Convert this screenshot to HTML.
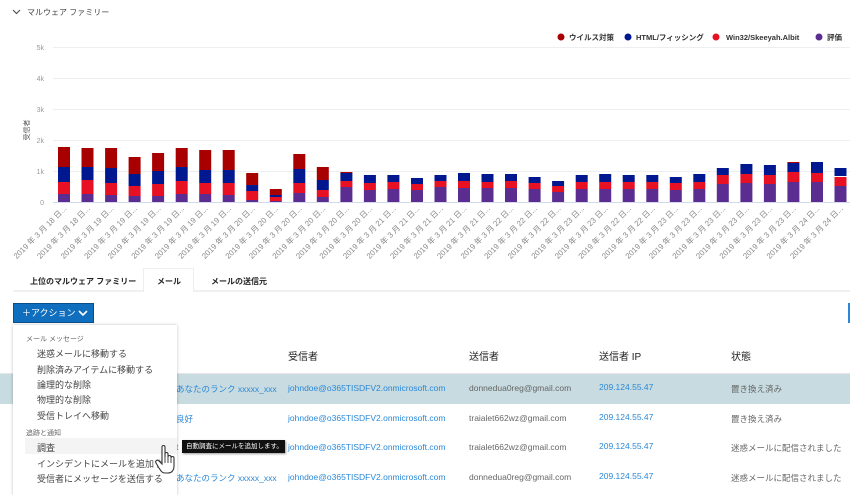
<!DOCTYPE html>
<html><head><meta charset="utf-8"><style>
*{margin:0;padding:0;box-sizing:border-box}
body{width:850px;height:490px;overflow:hidden;background:#fff;font-family:"Liberation Sans","Noto Sans CJK JP",sans-serif;position:relative;color:#333}
.a{position:absolute;white-space:nowrap}
.m{font-size:9px;color:#444}
.h{font-size:10px;color:#222}
.b{font-size:8.5px;color:#2b88d8}
.g{font-size:8.5px;color:#666}
</style></head><body>
<svg class="a" style="left:0;top:0" width="850" height="262" font-family="Liberation Sans,Noto Sans CJK JP,sans-serif">
<path d="M13 10 l3.5 3.5 l3.5 -3.5" stroke="#555" stroke-width="1.2" fill="none"/>
<text x="27" y="15" font-size="8" fill="#444">マルウェア ファミリー</text>
<g stroke="#eceef2" stroke-width="1"><line x1="53" y1="47.5" x2="850" y2="47.5"/><line x1="53" y1="78.5" x2="850" y2="78.5"/><line x1="53" y1="109.5" x2="850" y2="109.5"/><line x1="53" y1="140.5" x2="850" y2="140.5"/><line x1="53" y1="171.5" x2="850" y2="171.5"/></g>
<line x1="53" y1="202.5" x2="850" y2="202.5" stroke="#d4d8ec"/>
<g font-size="7" fill="#999" text-anchor="end"><text x="44" y="50">5k</text><text x="44" y="81">4k</text><text x="44" y="112">3k</text><text x="44" y="143">2k</text><text x="44" y="174">1k</text><text x="44" y="205">0</text></g>
<text transform="translate(29,130) rotate(-90)" font-size="7" fill="#555" text-anchor="middle">受信者</text>
<g font-size="7.5" font-weight="bold" fill="#333">
<circle cx="561" cy="37" r="3.5" fill="#a80000"/><text x="569" y="40">ウイルス対策</text>
<circle cx="628" cy="37" r="3.5" fill="#00188f"/><text x="636" y="40">HTML/フィッシング</text>
<circle cx="716" cy="37" r="3.5" fill="#e81123"/><text x="726" y="40">Win32/Skeeyah.Albit</text>
<circle cx="819" cy="37" r="3.5" fill="#5c2d91"/><text x="827" y="40">評価</text>
</g>
<g id="bars">
<g transform="translate(64,0)"><rect x="-6" y="194" width="12" height="8" fill="#5c2d91"/><rect x="-6" y="182" width="12" height="12" fill="#e81123"/><rect x="-6" y="167" width="12" height="15" fill="#00188f"/><rect x="-6" y="147" width="12" height="20" fill="#a80000"/></g>
<g transform="translate(87.5,0)"><rect x="-6" y="194" width="12" height="8" fill="#5c2d91"/><rect x="-6" y="180" width="12" height="14" fill="#e81123"/><rect x="-6" y="167" width="12" height="13" fill="#00188f"/><rect x="-6" y="148" width="12" height="19" fill="#a80000"/></g>
<g transform="translate(111.1,0)"><rect x="-6" y="195" width="12" height="7" fill="#5c2d91"/><rect x="-6" y="183" width="12" height="12" fill="#e81123"/><rect x="-6" y="168" width="12" height="15" fill="#00188f"/><rect x="-6" y="148" width="12" height="20" fill="#a80000"/></g>
<g transform="translate(134.6,0)"><rect x="-6" y="196" width="12" height="6" fill="#5c2d91"/><rect x="-6" y="186" width="12" height="10" fill="#e81123"/><rect x="-6" y="174" width="12" height="12" fill="#00188f"/><rect x="-6" y="157" width="12" height="17" fill="#a80000"/></g>
<g transform="translate(158.1,0)"><rect x="-6" y="196" width="12" height="6" fill="#5c2d91"/><rect x="-6" y="184" width="12" height="12" fill="#e81123"/><rect x="-6" y="171" width="12" height="13" fill="#00188f"/><rect x="-6" y="153" width="12" height="18" fill="#a80000"/></g>
<g transform="translate(181.7,0)"><rect x="-6" y="194" width="12" height="8" fill="#5c2d91"/><rect x="-6" y="181" width="12" height="13" fill="#e81123"/><rect x="-6" y="167" width="12" height="14" fill="#00188f"/><rect x="-6" y="148" width="12" height="19" fill="#a80000"/></g>
<g transform="translate(205.2,0)"><rect x="-6" y="194" width="12" height="8" fill="#5c2d91"/><rect x="-6" y="183" width="12" height="11" fill="#e81123"/><rect x="-6" y="170" width="12" height="13" fill="#00188f"/><rect x="-6" y="150" width="12" height="20" fill="#a80000"/></g>
<g transform="translate(228.7,0)"><rect x="-6" y="195" width="12" height="7" fill="#5c2d91"/><rect x="-6" y="183" width="12" height="12" fill="#e81123"/><rect x="-6" y="170" width="12" height="13" fill="#00188f"/><rect x="-6" y="150" width="12" height="20" fill="#a80000"/></g>
<g transform="translate(252.2,0)"><rect x="-6" y="200" width="12" height="2" fill="#5c2d91"/><rect x="-6" y="191" width="12" height="9" fill="#e81123"/><rect x="-6" y="185" width="12" height="6" fill="#00188f"/><rect x="-6" y="173" width="12" height="12" fill="#a80000"/></g>
<g transform="translate(275.8,0)"><rect x="-6" y="201" width="12" height="1" fill="#5c2d91"/><rect x="-6" y="197" width="12" height="4" fill="#e81123"/><rect x="-6" y="195" width="12" height="2" fill="#00188f"/><rect x="-6" y="189" width="12" height="6" fill="#a80000"/></g>
<g transform="translate(299.3,0)"><rect x="-6" y="193" width="12" height="9" fill="#5c2d91"/><rect x="-6" y="183" width="12" height="10" fill="#e81123"/><rect x="-6" y="169" width="12" height="14" fill="#00188f"/><rect x="-6" y="154" width="12" height="15" fill="#a80000"/></g>
<g transform="translate(322.8,0)"><rect x="-6" y="197" width="12" height="5" fill="#5c2d91"/><rect x="-6" y="190" width="12" height="7" fill="#e81123"/><rect x="-6" y="180" width="12" height="10" fill="#00188f"/><rect x="-6" y="167" width="12" height="13" fill="#a80000"/></g>
<g transform="translate(346.4,0)"><rect x="-6" y="187" width="12" height="15" fill="#5c2d91"/><rect x="-6" y="181" width="12" height="6" fill="#e81123"/><rect x="-6" y="173" width="12" height="8" fill="#00188f"/><rect x="-6" y="172" width="12" height="1" fill="#a80000"/></g>
<g transform="translate(369.9,0)"><rect x="-6" y="190" width="12" height="12" fill="#5c2d91"/><rect x="-6" y="183" width="12" height="7" fill="#e81123"/><rect x="-6" y="175" width="12" height="8" fill="#00188f"/></g>
<g transform="translate(393.4,0)"><rect x="-6" y="189" width="12" height="13" fill="#5c2d91"/><rect x="-6" y="182" width="12" height="7" fill="#e81123"/><rect x="-6" y="175" width="12" height="7" fill="#00188f"/></g>
<g transform="translate(417,0)"><rect x="-6" y="190" width="12" height="12" fill="#5c2d91"/><rect x="-6" y="184" width="12" height="6" fill="#e81123"/><rect x="-6" y="178" width="12" height="6" fill="#00188f"/></g>
<g transform="translate(440.5,0)"><rect x="-6" y="187" width="12" height="15" fill="#5c2d91"/><rect x="-6" y="181" width="12" height="6" fill="#e81123"/><rect x="-6" y="175" width="12" height="6" fill="#00188f"/></g>
<g transform="translate(464,0)"><rect x="-6" y="188" width="12" height="14" fill="#5c2d91"/><rect x="-6" y="181" width="12" height="7" fill="#e81123"/><rect x="-6" y="173" width="12" height="8" fill="#00188f"/></g>
<g transform="translate(487.5,0)"><rect x="-6" y="188" width="12" height="14" fill="#5c2d91"/><rect x="-6" y="182" width="12" height="6" fill="#e81123"/><rect x="-6" y="174" width="12" height="8" fill="#00188f"/></g>
<g transform="translate(511,0)"><rect x="-6" y="188" width="12" height="14" fill="#5c2d91"/><rect x="-6" y="181" width="12" height="7" fill="#e81123"/><rect x="-6" y="174" width="12" height="7" fill="#00188f"/></g>
<g transform="translate(534.6,0)"><rect x="-6" y="189" width="12" height="13" fill="#5c2d91"/><rect x="-6" y="183" width="12" height="6" fill="#e81123"/><rect x="-6" y="177" width="12" height="6" fill="#00188f"/></g>
<g transform="translate(558.1,0)"><rect x="-6" y="192" width="12" height="10" fill="#5c2d91"/><rect x="-6" y="186" width="12" height="6" fill="#e81123"/><rect x="-6" y="181" width="12" height="5" fill="#00188f"/></g>
<g transform="translate(581.7,0)"><rect x="-6" y="189" width="12" height="13" fill="#5c2d91"/><rect x="-6" y="182" width="12" height="7" fill="#e81123"/><rect x="-6" y="175" width="12" height="7" fill="#00188f"/></g>
<g transform="translate(605.2,0)"><rect x="-6" y="189" width="12" height="13" fill="#5c2d91"/><rect x="-6" y="182" width="12" height="7" fill="#e81123"/><rect x="-6" y="174" width="12" height="8" fill="#00188f"/></g>
<g transform="translate(628.7,0)"><rect x="-6" y="189" width="12" height="13" fill="#5c2d91"/><rect x="-6" y="182" width="12" height="7" fill="#e81123"/><rect x="-6" y="175" width="12" height="7" fill="#00188f"/></g>
<g transform="translate(652.3,0)"><rect x="-6" y="189" width="12" height="13" fill="#5c2d91"/><rect x="-6" y="182" width="12" height="7" fill="#e81123"/><rect x="-6" y="175" width="12" height="7" fill="#00188f"/></g>
<g transform="translate(675.8,0)"><rect x="-6" y="190" width="12" height="12" fill="#5c2d91"/><rect x="-6" y="183" width="12" height="7" fill="#e81123"/><rect x="-6" y="177" width="12" height="6" fill="#00188f"/></g>
<g transform="translate(699.3,0)"><rect x="-6" y="189" width="12" height="13" fill="#5c2d91"/><rect x="-6" y="182" width="12" height="7" fill="#e81123"/><rect x="-6" y="174" width="12" height="8" fill="#00188f"/></g>
<g transform="translate(722.8,0)"><rect x="-6" y="184" width="12" height="18" fill="#5c2d91"/><rect x="-6" y="175" width="12" height="9" fill="#e81123"/><rect x="-6" y="168" width="12" height="7" fill="#00188f"/></g>
<g transform="translate(746.4,0)"><rect x="-6" y="183" width="12" height="19" fill="#5c2d91"/><rect x="-6" y="174" width="12" height="9" fill="#e81123"/><rect x="-6" y="164" width="12" height="10" fill="#00188f"/></g>
<g transform="translate(769.9,0)"><rect x="-6" y="184" width="12" height="18" fill="#5c2d91"/><rect x="-6" y="175" width="12" height="9" fill="#e81123"/><rect x="-6" y="165" width="12" height="10" fill="#00188f"/></g>
<g transform="translate(793.4,0)"><rect x="-6" y="182" width="12" height="20" fill="#5c2d91"/><rect x="-6" y="172" width="12" height="10" fill="#e81123"/><rect x="-6" y="163" width="12" height="9" fill="#00188f"/><rect x="-6" y="162" width="12" height="1" fill="#a80000"/></g>
<g transform="translate(817,0)"><rect x="-6" y="182" width="12" height="20" fill="#5c2d91"/><rect x="-6" y="173" width="12" height="9" fill="#e81123"/><rect x="-6" y="162" width="12" height="11" fill="#00188f"/></g>
<g transform="translate(840.5,0)"><rect x="-6" y="186" width="12" height="16" fill="#5c2d91"/><rect x="-6" y="177" width="12" height="9" fill="#e81123"/><rect x="-6" y="168" width="12" height="8" fill="#00188f"/></g>
</g>
<g font-size="7.8" fill="#888" text-anchor="end">
<text transform="translate(67,209) rotate(-45)">2019 年 3 月 18 日...</text>
<text transform="translate(90.5,209) rotate(-45)">2019 年 3 月 18 日...</text>
<text transform="translate(114.1,209) rotate(-45)">2019 年 3 月 19 日...</text>
<text transform="translate(137.6,209) rotate(-45)">2019 年 3 月 19 日...</text>
<text transform="translate(161.1,209) rotate(-45)">2019 年 3 月 19 日...</text>
<text transform="translate(184.7,209) rotate(-45)">2019 年 3 月 19 日...</text>
<text transform="translate(208.2,209) rotate(-45)">2019 年 3 月 19 日...</text>
<text transform="translate(231.7,209) rotate(-45)">2019 年 3 月 19 日...</text>
<text transform="translate(255.2,209) rotate(-45)">2019 年 3 月 20 日...</text>
<text transform="translate(278.8,209) rotate(-45)">2019 年 3 月 20 日...</text>
<text transform="translate(302.3,209) rotate(-45)">2019 年 3 月 20 日...</text>
<text transform="translate(325.8,209) rotate(-45)">2019 年 3 月 20 日...</text>
<text transform="translate(349.4,209) rotate(-45)">2019 年 3 月 20 日...</text>
<text transform="translate(372.9,209) rotate(-45)">2019 年 3 月 20 日...</text>
<text transform="translate(396.4,209) rotate(-45)">2019 年 3 月 21 日...</text>
<text transform="translate(420,209) rotate(-45)">2019 年 3 月 21 日...</text>
<text transform="translate(443.5,209) rotate(-45)">2019 年 3 月 21 日...</text>
<text transform="translate(467,209) rotate(-45)">2019 年 3 月 21 日...</text>
<text transform="translate(490.5,209) rotate(-45)">2019 年 3 月 21 日...</text>
<text transform="translate(514,209) rotate(-45)">2019 年 3 月 22 日...</text>
<text transform="translate(537.6,209) rotate(-45)">2019 年 3 月 22 日...</text>
<text transform="translate(561.1,209) rotate(-45)">2019 年 3 月 22 日...</text>
<text transform="translate(584.7,209) rotate(-45)">2019 年 3 月 23 日...</text>
<text transform="translate(608.2,209) rotate(-45)">2019 年 3 月 23 日...</text>
<text transform="translate(631.7,209) rotate(-45)">2019 年 3 月 22 日...</text>
<text transform="translate(655.3,209) rotate(-45)">2019 年 3 月 22 日...</text>
<text transform="translate(678.8,209) rotate(-45)">2019 年 3 月 23 日...</text>
<text transform="translate(702.3,209) rotate(-45)">2019 年 3 月 23 日...</text>
<text transform="translate(725.8,209) rotate(-45)">2019 年 3 月 23 日...</text>
<text transform="translate(749.4,209) rotate(-45)">2019 年 3 月 23 日...</text>
<text transform="translate(772.9,209) rotate(-45)">2019 年 3 月 23 日...</text>
<text transform="translate(796.4,209) rotate(-45)">2019 年 3 月 23 日...</text>
<text transform="translate(820,209) rotate(-45)">2019 年 3 月 24 日...</text>
<text transform="translate(843.5,209) rotate(-45)">2019 年 3 月 24 日...</text>
</g>
</svg>

<!-- tabs -->
<div class="a" style="left:13px;top:290px;width:837px;height:2px;background:#f0f0f0"></div>
<div class="a" style="left:143px;top:268px;width:51px;height:24px;background:#fff;border:1px solid #eee;border-bottom:none"></div>
<div class="a" style="left:30px;top:276px;font-size:8px;font-weight:bold;color:#222">上位のマルウェア ファミリー</div>
<div class="a" style="left:157px;top:276px;font-size:8px;font-weight:bold;color:#222">メール</div>
<div class="a" style="left:211px;top:276px;font-size:8px;font-weight:bold;color:#222">メールの送信元</div>

<!-- button -->
<div class="a" style="left:13px;top:303px;width:81px;height:20px;background:#106ebe;border:1px solid #0a4f8a;color:#fff;font-size:9px;line-height:18px;padding-left:8px">＋アクション
<svg style="position:absolute;left:64px;top:6px" width="10" height="7"><path d="M1 1 L5 5 L9 1" stroke="#fff" stroke-width="1.6" fill="none"/></svg></div>
<div class="a" style="left:848px;top:303px;width:2px;height:20px;background:#2b88d8"></div>

<!-- table -->
<div class="a h" style="left:288px;top:348px">受信者</div>
<div class="a h" style="left:469px;top:348px">送信者</div>
<div class="a h" style="left:599px;top:348px">送信者 IP</div>
<div class="a h" style="left:731px;top:348px">状態</div>
<div class="a" style="left:0;top:373px;width:850px;height:1px;background:#e6e6e6"></div>
<div class="a" style="left:0;top:374px;width:850px;height:30px;background:#c7dbe0"></div>

<div class="a b" style="left:176px;top:383px">あなたのランク xxxxx_xxx</div>
<div class="a b" style="left:288px;top:383px">johndoe@o365TISDFV2.onmicrosoft.com</div>
<div class="a g" style="left:469px;top:383px">donnedua0reg@gmail.com</div>
<div class="a b" style="left:599px;top:382px">209.124.55.47</div>
<div class="a g" style="left:731px;top:383px">置き換え済み</div>

<div class="a b" style="left:176px;top:413px">良好</div>
<div class="a b" style="left:288px;top:413px">johndoe@o365TISDFV2.onmicrosoft.com</div>
<div class="a g" style="left:469px;top:413px">traialet662wz@gmail.com</div>
<div class="a b" style="left:599px;top:412px">209.124.55.47</div>
<div class="a g" style="left:731px;top:413px">置き換え済み</div>

<div class="a b" style="left:176px;top:442px">t</div>
<div class="a b" style="left:288px;top:442px">johndoe@o365TISDFV2.onmicrosoft.com</div>
<div class="a g" style="left:469px;top:442px">traialet662wz@gmail.com</div>
<div class="a b" style="left:599px;top:441px">209.124.55.47</div>
<div class="a g" style="left:731px;top:442px">迷惑メールに配信されました</div>

<div class="a b" style="left:176px;top:472px">あなたのランク xxxxx_xxx</div>
<div class="a b" style="left:288px;top:472px">johndoe@o365TISDFV2.onmicrosoft.com</div>
<div class="a g" style="left:469px;top:472px">donnedua0reg@gmail.com</div>
<div class="a b" style="left:599px;top:471px">209.124.55.47</div>
<div class="a g" style="left:731px;top:472px">迷惑メールに配信されました</div>

<!-- dropdown -->
<div class="a" style="left:13px;top:325px;width:164px;height:170px;background:#fff;box-shadow:0 0 3px rgba(0,0,0,0.25)"></div>
<div class="a" style="left:26px;top:334px;font-size:7px;color:#666">メール メッセージ</div>
<div class="a m" style="left:37px;top:347px">迷惑メールに移動する</div>
<div class="a m" style="left:37px;top:363px">削除済みアイテムに移動する</div>
<div class="a m" style="left:37px;top:378px">論理的な削除</div>
<div class="a m" style="left:37px;top:393px">物理的な削除</div>
<div class="a m" style="left:37px;top:409px">受信トレイへ移動</div>
<div class="a" style="left:26px;top:428px;font-size:7px;color:#666">追跡と通知</div>
<div class="a" style="left:25px;top:438px;width:152px;height:16px;background:#f4f4f4"></div>
<div class="a m" style="left:37px;top:441px">調査</div>
<div class="a m" style="left:37px;top:457px">インシデントにメールを追加する</div>
<div class="a m" style="left:37px;top:472px">受信者にメッセージを送信する</div>

<!-- tooltip -->
<div class="a" style="left:182px;top:440px;width:103px;height:13px;background:#111;color:#fff;font-size:6.5px;line-height:13px;padding-left:4px;box-shadow:1px 1px 2px rgba(0,0,0,.4)">自動調査にメールを追加します。</div>

<!-- hand cursor -->
<svg class="a" style="left:155px;top:444px" width="24" height="32" viewBox="0 0 24 32">
<path d="M7 3 C7 1 10 1 10 3 L10 13 L10 10 C10 8 13 8 13 10 L13 13 C13 11 16 11 16 13 L16 14 C16 12 19 12 19 14 L19 22 C19 26 17 29 13 29 L10 29 C7 29 6 27 4 24 L1 19 C0 17 2 15 4 17 L7 20 Z" fill="#fff" stroke="#333" stroke-width="1.1"/>
<path d="M10 13 L10 19 M13 13 L13 19 M16 14 L16 19" stroke="#333" stroke-width="0.9"/>
</svg>
</body></html>
